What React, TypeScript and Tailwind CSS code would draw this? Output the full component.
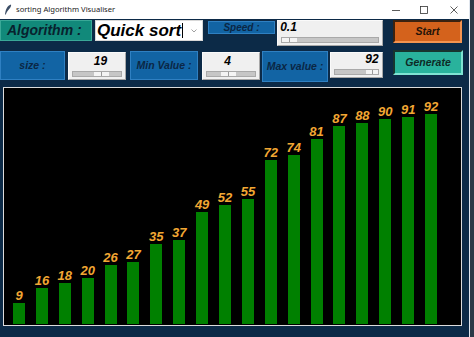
import React from 'react';

const values = [9, 16, 18, 20, 26, 27, 35, 37, 49, 52, 55, 72, 74, 81, 87, 88, 90, 91, 92];

const font = { fontFamily: '"Liberation Sans", Arial, sans-serif' };

const Label: React.FC<{ text: string; className: string }> = ({ text, className }) => (
    <div className={`flex items-center justify-center bg-[#1264a4] border border-[#2f80c2] text-[#0b2745] font-bold italic ${className}`}>
        {text}
    </div>
);

const Scale: React.FC<{ value: string; offset: number; className: string; align?: string }> = ({ value, offset, className }) => (
    <div className={`flex flex-col justify-end bg-[#f0f0f0] border border-t-[#fafafa] border-l-[#fafafa] border-b-[#a8a8a8] border-r-[#a8a8a8] px-[3px] pb-[2px] ${className}`}>
        <div className="flex mb-[4px]">
            <div style={{ marginLeft: offset }} className="w-[15px] flex justify-center whitespace-nowrap text-[12px] leading-none font-bold italic text-black">
                {value}
            </div>
        </div>
        <div className="h-[6px] bg-[#c6c6c6] border border-[#a9a9a9] flex items-center">
            <div style={{ marginLeft: offset }} className="w-[15px] h-[4px] flex">
                <div className="flex-1 bg-[#f4f4f4] border-r border-[#9a9a9a]" />
                <div className="flex-1 bg-[#f4f4f4]" />
            </div>
        </div>
    </div>
);

export default function App() {
    return (
        <div style={font} className="w-[474px] h-[337px] overflow-hidden flex bg-[#2c3a48]">
            <div className="w-[469px] h-full flex flex-col bg-[#0c2a47]">
                {/* title bar */}
                <div className="h-[19px] bg-white flex items-center shrink-0">
                    <svg width="8" height="11" viewBox="0 0 8 11" className="ml-[4px]">
                        <path d="M7 0.5 C4 1.5 2 4 1.2 9 L1 10.5 L1.8 10.5 C2.5 8 4.5 6 6 4 C7 2.5 7.3 1.5 7 0.5 Z" fill="#3c4e66" />
                    </svg>
                    <span className="ml-[4px] text-[7.6px] text-[#222]" style={{ fontFamily: '"Noto Sans", "Liberation Sans", sans-serif' }}>
                        sorting Algorithm Visualiser
                    </span>
                    <div className="ml-auto flex items-center">
                        <svg width="10" height="10" viewBox="0 0 10 10" className="mr-[18px]">
                            <line x1="1" y1="5.5" x2="9" y2="5.5" stroke="#333" strokeWidth="0.8" />
                        </svg>
                        <svg width="10" height="10" viewBox="0 0 10 10" className="mr-[20px]">
                            <rect x="1.5" y="1.5" width="7" height="7" fill="none" stroke="#333" strokeWidth="0.8" />
                        </svg>
                        <svg width="10" height="10" viewBox="0 0 10 10" className="mr-[10px]">
                            <line x1="1.5" y1="1.5" x2="8.5" y2="8.5" stroke="#333" strokeWidth="0.8" />
                            <line x1="8.5" y1="1.5" x2="1.5" y2="8.5" stroke="#333" strokeWidth="0.8" />
                        </svg>
                    </div>
                </div>

                {/* row 1 */}
                <div className="h-[31px] pt-[1px] flex items-start shrink-0">
                    <div className="w-[92px] h-[21px] bg-[#11897a] border border-[#3aa897] flex items-center pl-[6px] text-[14px] font-bold italic text-[#08222e]">
                        Algorithm :
                    </div>
                    <div className="ml-[3px] w-[108px] h-[21px] bg-white border border-[#d8d8d8] flex items-center pl-[1px]">
                        <span className="text-[17px] leading-none font-bold italic text-black">Quick sort</span>
                        <span className="w-[1px] h-[15px] bg-black ml-[1px]" />
                        <svg width="8" height="6" viewBox="0 0 8 6" className="ml-auto mr-[4px]">
                            <path d="M1.5 1.5 L4 4 L6.5 1.5" fill="none" stroke="#888" strokeWidth="0.8" />
                        </svg>
                    </div>
                    <Label text="Speed :" className="ml-[5px] mt-[1px] w-[67px] h-[13px] text-[10px]" />
                    <Scale value="0.1" offset={0} className="ml-[2px] w-[106px] h-[26px]" />
                    <button className="ml-[10px] w-[69px] h-[23px] bg-[#d4621c] border-2 border-t-[#3b2210] border-l-[#3b2210] border-b-[#f39350] border-r-[#f39350] flex items-center justify-center text-[10.5px] font-bold italic text-[#241208]">
                        Start
                    </button>
                </div>

                {/* row 2 */}
                <div className="h-[37px] flex items-start shrink-0">
                    <Label text="size :" className="mt-[1px] w-[65px] h-[29px] text-[10.5px]" />
                    <Scale value="19" offset={21} className="ml-[3px] mt-[2px] w-[58px] h-[28px]" />
                    <Label text="Min Value :" className="ml-[4px] mt-[1px] w-[68px] h-[29px] text-[10.5px]" />
                    <Scale value="4" offset={14} className="ml-[4px] mt-[2px] w-[58px] h-[28px]" />
                    <Label text="Max value :" className="ml-[2px] mt-[1px] w-[66px] h-[31px] text-[10.5px]" />
                    <Scale value="92" offset={31} className="ml-[2px] mt-[2px] w-[53px] h-[26px]" />
                    <button className="ml-[10px] w-[70px] h-[25px] bg-[#29b29c] border-2 border-t-[#17352f] border-l-[#17352f] border-b-[#7fe3d2] border-r-[#7fe3d2] flex items-center justify-center text-[10.5px] font-bold italic text-[#0e2a26]">
                        Generate
                    </button>
                </div>

                {/* canvas */}
                <div className="ml-[3px] w-[459px] h-[239px] bg-black border border-[#dcdcdc] flex items-end pl-[9px] pb-[1px] gap-[10.9px] shrink-0">
                    {values.map((v, i) => (
                        <div key={i} className="w-[12px] flex flex-col items-center">
                            <span className="whitespace-nowrap text-[13px] leading-none font-bold italic text-[#f2a733] mb-[1px]">{v}</span>
                            <div className="w-[12px] bg-[#008000]" style={{ height: Math.round(v * 2.28) }} />
                        </div>
                    ))}
                </div>
            </div>
            <div className="w-[1px] h-full bg-[#e0e6ee]" />
        </div>
    );
}
